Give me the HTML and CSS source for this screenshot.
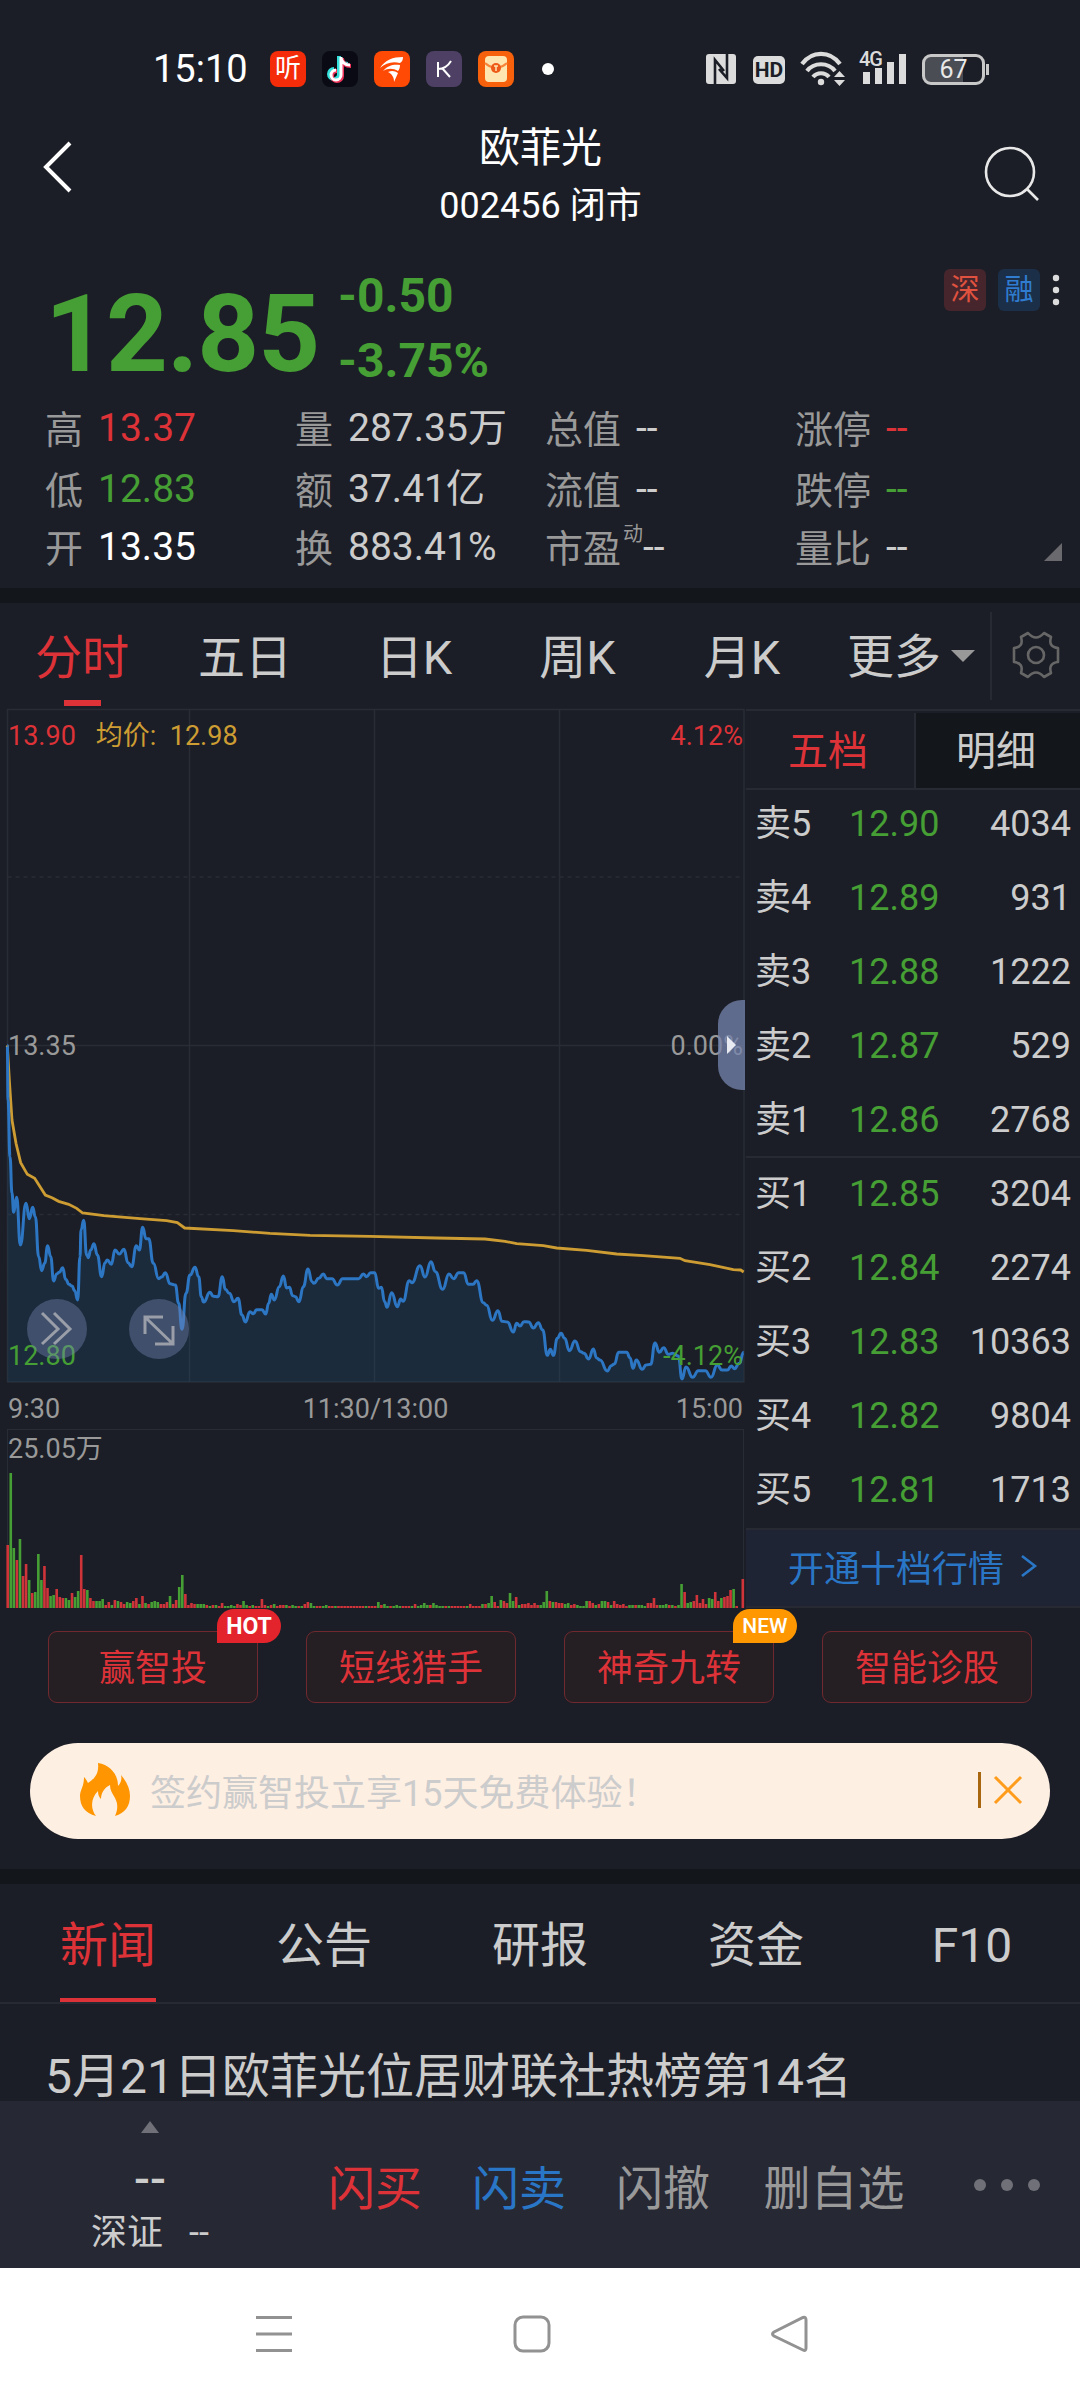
FILE: index.html
```
<!DOCTYPE html>
<html lang="zh-CN">
  <head>
    <meta charset="UTF-8" />
    <meta name="viewport" content="width=device-width, initial-scale=1.0" />
    <title>欧菲光 002456</title>
    <link rel="stylesheet" href="styles.css">
  </head>
  <body>
    <div class="status">
      <span class="clock">15:10</span>
      <div class="apps">
        <span class="app app-ting">听</span>
        <svg class="app" viewBox="0 0 36 36">
          <rect width="36" height="36" rx="8" fill="#0a0a14" />
          <g fill="none" stroke-width="4">
            <path d="M18 6v18a5 5 0 1 1-5-5M18 7c1 5 4 7 9 7" stroke="#35e0dc" transform="translate(-1 -1)" />
            <path d="M20 7v18a5 5 0 1 1-5-5M20 8c1 5 4 7 9 7" stroke="#f0355c" />
            <path d="M19 6v18a5 5 0 1 1-5-5M19 7c1 5 4 7 9 7" stroke="#fff" stroke-width="3" />
          </g>
        </svg>
        <svg class="app" viewBox="0 0 36 36">
          <rect width="36" height="36" rx="8" fill="#ff4a05" />
          <g fill="#fff">
            <path d="M6 17C11 9 19 6 29 6C29 9 28 11 26 12C18 10 12 12 6 17Z" />
            <path d="M9 20C14 14 20 13 26 14C26 17 25 19 24 20C19 17 14 17 9 20Z" />
            <path d="M14 21C18 19 21 20 24 22L20 31C20 26 18 23 14 21Z" />
          </g>
        </svg>
        <svg class="app" viewBox="0 0 36 36">
          <rect width="36" height="36" rx="8" fill="#4d4064" />
          <path d="M12 11v15M25 10C22 15 18 18 12 18M16 17l8 9" fill="none" stroke="#fff" stroke-width="2" />
        </svg>
        <svg class="app" viewBox="0 0 36 36">
          <rect width="36" height="36" rx="8" fill="#f7610b" />
          <rect x="7" y="5" width="22" height="26" rx="4" fill="#ffe6b0" />
          <path d="M7 12c4 4 6 4 11 5 5-1 7-1 11-5" fill="none" stroke="#f7843b" stroke-width="2" />
          <circle cx="18" cy="17" r="5" fill="#ee5a18" />
          <path d="M16 15h4M18 15v5" stroke="#ffe6b0" stroke-width="1.5" />
        </svg>
      </div>
      <i class="dot"></i>
      <div class="signals">
        <svg width="30" height="30" viewBox="0 0 30 30">
          <rect width="30" height="30" rx="3" fill="#dcdcdc" />
          <path d="M9 30V6l9 11M21 0v24l-8-9" fill="none" stroke="#1b1e26" stroke-width="2.6" />
        </svg>
        <span class="hd">HD</span>
        <svg class="wifi" width="46" height="36" viewBox="0 0 46 36">
          <g fill="none" stroke="#dcdcdc" stroke-width="4.2">
            <path d="M2 13C12-0.500 30-0.500 40 13" />
            <path d="M7 20c7-9 21-9 28 0" />
            <path d="M13 26c4-5 12-5 16 0" />
          </g>
          <circle cx="21" cy="31" r="3.2" fill="#dcdcdc" />
          <path d="M34 26l5.500-6 5.500 6zM34 29l5.500 6 5.500-6z" fill="#dcdcdc" />
        </svg>
        <div class="cell">
          <span>4G</span>
          <svg width="44" height="32" viewBox="0 0 44 32">
            <path fill="#dcdcdc" d="M0 19h7v12H0zM12 15h7v16h-7zM24 9h7v22h-7zM36 1h7v30h-7z" />
          </svg>
        </div>
        <span class="battery">67</span>
      </div>
    </div>

    <header class="header">
      <svg width="34" height="54" viewBox="0 0 34 54">
        <path d="M30 3L6 27l24 24" fill="none" stroke="#fff" stroke-width="4" />
      </svg>
      <div class="title">
        <h1>欧菲光</h1>
        <p>002456 闭市</p>
      </div>
      <svg class="search" width="56" height="56" viewBox="0 0 56 56">
        <circle cx="26" cy="26" r="24" fill="none" stroke="#e8e8e8" stroke-width="2.6" />
        <path d="M43 43l11 11" stroke="#e8e8e8" stroke-width="2.6" />
      </svg>
    </header>

    <section class="quote">
      <div class="price">
        <strong>12.85</strong>
        <div class="change">
          <span>-0.50</span>
          <span>-3.75%</span>
        </div>
        <div class="marks">
          <span class="mark mark-sz">深</span>
          <span class="mark mark-rz">融</span>
          <svg width="8" height="32" viewBox="0 0 8 32" fill="#dcdcdc">
            <circle cx="4" cy="4" r="3.2" /><circle cx="4" cy="16" r="3.2" /><circle cx="4" cy="28" r="3.2" />
          </svg>
        </div>
      </div>
      <div class="stats">
        <div><label>高</label><b class="red">13.37</b></div>
        <div><label>量</label><b>287.35万</b></div>
        <div><label>总值</label><b>--</b></div>
        <div><label>涨停</label><b class="red">--</b></div>
        <div><label>低</label><b class="green">12.83</b></div>
        <div><label>额</label><b>37.41亿</b></div>
        <div><label>流值</label><b>--</b></div>
        <div><label>跌停</label><b class="green">--</b></div>
        <div><label>开</label><b class="white">13.35</b></div>
        <div><label>换</label><b>883.41%</b></div>
        <div><label class="pe">市盈<sup>动</sup></label><b>--</b></div>
        <div><label>量比</label><b>--</b></div>
      </div>
      <i class="corner"></i>
    </section>

    <nav class="periods">
      <a class="on">分时</a>
      <a>五日</a>
      <a>日K</a>
      <a>周K</a>
      <a>月K</a>
      <a class="more">更多<i></i></a>
      <span class="gear">
        <svg width="48" height="50" viewBox="0 0 48 50" fill="none" stroke="#666" stroke-width="2.6">
          <path stroke-linejoin="round" d="M16 3Q24 12 32 3L39 7Q36 17 46 18V32Q36 33 39 43L32 47Q24 38 16 47L9 43Q12 33 2 32V18Q12 17 9 7Z" />
          <circle cx="24" cy="25" r="8" />
        </svg>
      </span>
    </nav>

    <main class="market">
      <div class="charts">
        <div class="trend">
          <svg width="746" height="676" viewBox="0 708 746 676">
            <g stroke="#282c34" stroke-width="1.5" fill="none">
              <path d="M7.5 709.5H744V1382H7.5zM189.5 709V1382M374.5 709V1382M559.5 709V1382M7.5 1045.5H744" />
              <path d="M7.5 877H744M7.5 1214.5H744" stroke-dasharray="4 4" />
            </g>
            <path id="area" fill="#1c72b0" fill-opacity=".16" />
            <path id="avg" fill="none" stroke="#cd9d33" stroke-width="2.8" />
            <path id="line" fill="none" stroke="#2c76c4" stroke-width="3" stroke-linejoin="round" />
          </svg>
          <div class="tag top"><span class="red">13.90</span><span class="avg">均价:&nbsp; 12.98</span><span class="red end">4.12%</span></div>
          <div class="tag mid"><span>13.35</span><span class="end">0.00%</span></div>
          <div class="tag low"><span class="green">12.80</span><span class="green end">-4.12%</span></div>
          <div class="round next">
            <svg width="60" height="60" viewBox="0 0 60 60"><path d="M15 14l16 16-16 15M27 14l16 16-16 15" /></svg>
          </div>
          <div class="round full">
            <svg width="60" height="60" viewBox="0 0 60 60"><path d="M16 35V18h18M17 19l27 26M26 45h18V27" /></svg>
          </div>
          <div class="handle"><i></i></div>
        </div>
        <div class="times"><span>9:30</span><span>11:30/13:00</span><span>15:00</span></div>
        <div class="volume">
          <span>25.05万</span>
          <svg width="746" height="140" viewBox="0 0 746 140">
            <path id="up" fill="#cf343a" />
            <path id="down" fill="#469f34" />
          </svg>
        </div>
      </div>

      <div class="book">
        <div class="book-tabs"><a class="on">五档</a><a>明细</a></div>
        <ul class="sell">
          <li><span>卖5</span><em>12.90</em><b>4034</b></li>
          <li><span>卖4</span><em>12.89</em><b>931</b></li>
          <li><span>卖3</span><em>12.88</em><b>1222</b></li>
          <li><span>卖2</span><em>12.87</em><b>529</b></li>
          <li><span>卖1</span><em>12.86</em><b>2768</b></li>
        </ul>
        <ul class="buy">
          <li><span>买1</span><em>12.85</em><b>3204</b></li>
          <li><span>买2</span><em>12.84</em><b>2274</b></li>
          <li><span>买3</span><em>12.83</em><b>10363</b></li>
          <li><span>买4</span><em>12.82</em><b>9804</b></li>
          <li><span>买5</span><em>12.81</em><b>1713</b></li>
        </ul>
        <a class="level2">开通十档行情
          <svg width="18" height="24" viewBox="0 0 18 24"><path d="M2 2l13 10L2 22" fill="none" stroke="#2a76c6" stroke-width="2.6" /></svg>
        </a>
      </div>
    </main>

    <section class="tools">
      <a>赢智投<i class="badge hot">HOT</i></a>
      <a>短线猎手</a>
      <a>神奇九转<i class="badge new">NEW</i></a>
      <a>智能诊股</a>
    </section>

    <div class="banner">
      <svg width="52" height="56" viewBox="0 0 52 56">
        <path fill="#ff9500" d="M19 1C31 3 39 12 39 24C42 21 43 17 42 13C48 20 51 27 51 34C51 44 46 51 36 54C39 47 39 42 36 36C33 31 31 28 31 23C25 26 22 31 22 37C20 35 19 33 19 29C12 36 11 46 17 54C6 51 1 44 1 34C1 28 5 25 5 15C7 17 8 19 9 21C17 16 20 10 19 1Z" />
      </svg>
      <p>签约赢智投立享15天免费体验！</p>
      <i></i>
      <svg class="close" width="30" height="30" viewBox="0 0 30 30"><path d="M2 2l26 26M28 2L2 28" stroke="#ff9c1b" stroke-width="3" /></svg>
    </div>

    <nav class="info-tabs">
      <a class="on">新闻</a>
      <a>公告</a>
      <a>研报</a>
      <a>资金</a>
      <a>F10</a>
    </nav>
    <div class="news">5月21日欧菲光位居财联社热榜第14名</div>

    <footer class="trade">
      <div class="index">
        <i></i>
        <b>--</b>
        <p><span>深证</span><span>--</span></p>
      </div>
      <a class="red">闪买</a>
      <a class="blue">闪卖</a>
      <a>闪撤</a>
      <a class="wide">删自选</a>
      <svg width="70" height="16" viewBox="0 0 70 16" fill="#6f7078">
        <circle cx="8" cy="8" r="6" /><circle cx="35" cy="8" r="6" /><circle cx="62" cy="8" r="6" />
      </svg>
    </footer>

    <div class="sysnav">
      <svg width="38" height="38" viewBox="0 0 38 38"><path d="M1 2.5h36M1 19h36M1 35.5h36" /></svg>
      <svg width="38" height="38" viewBox="0 0 38 38"><rect x="2" y="2" width="34" height="34" rx="8" /></svg>
      <svg width="38" height="38" viewBox="0 0 38 38"><path d="M33 2.5Q36 1.500 36 5V33Q36 36.500 33 35L4 21Q1 19 4 17Z" /></svg>
    </div>

    <script>
      // points are stored at 3x, y counted from 1000
      const price = [
        22,136, 24,300, 30,470, 36,580, 41,637, 50,592, 61,735, 78,610, 88,656, 98,622, 106,650, 116,770, 125,812, 134,790,
        143,737, 152,770, 161,843, 170,822, 178,817, 188,803, 197,838, 207,853, 216,858, 224,872, 233,900, 240,770, 243,690,
        251,661, 260,765, 265,773, 272,750, 282,731, 292,765, 305,830, 315,788, 322,780, 334,793, 345,750, 358,762, 372,748,
        384,788, 395,800, 409,737, 418,750, 428,682, 438,716, 446,716, 460,790, 476,836, 485,831, 496,818, 510,851, 526,855,
        536,910, 546,988, 558,880, 570,825, 585,802, 596,830, 604,890, 611,906, 630,877, 640,889, 654,890, 667,830, 676,868,
        688,880, 702,905, 714,895, 726,945, 736,966, 750,935, 760,941, 770,929, 786,929, 797,942, 806,910, 814,883, 823,900,
        838,860, 850,828, 860,864, 868,862, 878,887, 886,890, 897,905, 910,860, 924,807, 936,845, 942,850, 956,835, 970,822,
        980,836, 996,836, 1012,855, 1028,836, 1076,836, 1090,822, 1100,830, 1112,818, 1124,818, 1136,865, 1144,862, 1154,905,
        1161,922, 1175,878, 1192,920, 1202,897, 1209,904, 1228,842, 1236,848, 1260,797, 1275,831, 1293,785, 1306,815,
        1328,868, 1347,822, 1361,836, 1376,818, 1391,818, 1405,853, 1419,853, 1430,842, 1450,908, 1460,916, 1477,961,
        1494,932, 1506,964, 1522,966, 1540,996, 1550,970, 1560,978, 1572,965, 1586,966, 1600,984, 1615,968, 1628,990,
        1642,1066, 1651,1048, 1660,1066, 1672,1015, 1683,1000, 1694,1015, 1708,1052, 1725,1023, 1742,1055, 1752,1060,
        1766,1077, 1780,1047, 1790,1074, 1800,1080, 1822,1113, 1834,1097, 1843,1092, 1856,1057, 1880,1057, 1890,1073,
        1899,1105, 1909,1080, 1927,1108, 1938,1095, 1952,1093, 1965,1029, 1978,1057, 1991,1043, 2005,1063, 2018,1060,
        2035,1068, 2046,1137, 2058,1101, 2078,1132, 2095,1112, 2116,1112, 2133,1132, 2152,1095, 2166,1110, 2182,1110,
        2194,1098, 2203,1106, 2218,1090, 2231,1057
      ]
      const average = [
        22,136, 28,240, 36,360, 48,430, 62,488, 82,523, 104,535, 136,585, 156,593, 176,604, 206,613, 230,625, 248,639,
        312,647, 420,656, 500,662, 532,668, 554,684, 700,692, 810,700, 930,706, 1110,709, 1310,714, 1455,717, 1515,724,
        1550,731, 1630,737, 1670,744, 1760,751, 1850,762, 1930,767, 2040,775, 2055,782, 2130,794, 2200,809, 2222,810, 2231,816
      ]
      // one bar per minute, r = up, g = down
      const volume = `r63 g135 g60 r48 g69 r32 r44 g28 r15 g16 g54 g28 r42 r20 g12 g13 r19 r11 r10 g10 g8 r15 g11 g17 r53 r19 g18 r10 r7 g7
        g7 g9 r3 r6 g3 r8 g7 r6 r4 g6 g5 r7 r10 g4 r12 g5 r4 g6 g7 g6 r4 r4 r6 g12 r4 r8 g21 g33 r14 r3
        r5 r4 g4 g4 g4 r3 g2 r3 g3 r2 r5 g2 g2 g3 g2 r4 r3 g7 g3 r2 g3 r2 r2 r9 r3 g2 r3 g4 r2 r3
        r3 g3 r2 g3 g2 r2 g2 r4 r6 g5 g2 r2 r2 g2 g3 r2 r2 g2 r2 r2 r2 r2 r2 r2 r2 r2 r2 g2 r2 r2
        r2 g6 r3 g4 g2 r2 g2 g3 g2 r2 r2 r2 g2 r4 g2 g3 g5 g3 r3 g5 g3 g2 g2 r2 g2 r2 r2 r2 r2 r2
        g2 r4 r2 r2 r2 g4 r4 g5 g12 r6 r2 g8 r7 r5 g15 g7 r11 g3 r4 r4 r5 r3 r5 r3 g3 g6 g17 r7 g6 r6
        r5 r5 g4 g5 r3 r4 g3 g2 g2 g7 r7 r5 g3 r4 g7 g7 r6 g3 r7 r4 r3 r4 r2 g3 g3 r3 g3 g3 g2 r5
        r5 r10 r3 g3 g3 g4 r3 g3 r2 g3 g24 r16 g5 g6 r7 r13 r5 r9 r4 g10 g9 r16 r7 g10 r11 r12 r18 g19 r2 g0 r29`.split(/\s+/)

      const toPath = (list, smooth) => {
        let d = ''
        let px, py
        for (let i = 0; i < list.length; i += 2) {
          const x = list[i] / 3
          const y = 1000 + list[i + 1] / 3
          if (i === 0) d += `M${x} ${y}`
          else if (smooth) d += `C${(px + x) / 2} ${py} ${(px + x) / 2} ${y} ${x} ${y}`
          else d += `L${x} ${y}`
          px = x
          py = y
        }
        return d
      }
      const line = toPath(price, true)
      document.querySelector('#line').setAttribute('d', line)
      document.querySelector('#area').setAttribute('d', line + 'V1382H7.500Z')
      document.querySelector('#avg').setAttribute('d', toPath(average, false))

      const bars = { r: '', g: '' }
      volume.forEach((item, i) => {
        const h = Number(item.slice(1))
        bars[item[0]] += `M${6.4 + i * 3.063} 140v-${h}h2.6v${h}z`
      })
      document.querySelector('#up').setAttribute('d', bars.r)
      document.querySelector('#down').setAttribute('d', bars.g)
    </script>
  </body>
</html>
```
FILE: styles.css
```
* {
  box-sizing: border-box;
  margin: 0;
  padding: 0;
}
body {
  width: 1080px;
  height: 2400px;
  overflow: hidden;
  background: #1b1e26;
  color: #ccc;
  font-family: Roboto, "Noto Sans CJK SC", sans-serif;
  font-size: 36px;
}
svg {
  display: block;
  flex: none;
}
i, em {
  font-style: normal;
}
b {
  font-weight: 400;
}
ul {
  list-style: none;
}
.red {
  color: #dc3238;
}
.green {
  color: #469f34;
}
.white {
  color: #fff;
}
.blue {
  color: #2a76c6;
}

/* 状态栏 */
.status {
  display: flex;
  align-items: center;
  height: 112px;
  padding: 26px 95px 0 152px;
}
.clock {
  width: 118px;
  padding-left: 1px;
  color: #fff;
  font-size: 38px;
}
.apps {
  display: flex;
  gap: 16px;
}
.app {
  width: 36px;
  height: 36px;
}
.app-ting {
  border-radius: 8px;
  background: #f52c0a;
  color: #fff;
  font-size: 26px;
  line-height: 35px;
  text-align: center;
}
.dot {
  width: 12px;
  height: 12px;
  margin-left: 28px;
  border-radius: 50%;
  background: #fff;
}
.signals {
  display: flex;
  align-items: center;
  margin-left: auto;
}
.hd {
  width: 32px;
  height: 28px;
  margin: 2px 15px 0 17px;
  border-radius: 5px;
  background: #dcdcdc;
  color: #1b1e26;
  font-size: 21px;
  font-weight: 700;
  line-height: 29px;
  text-align: center;
}
.cell {
  position: relative;
  margin: 0 15px 0 17px;
}
.cell span {
  position: absolute;
  left: -4px;
  top: -5px;
  color: #dcdcdc;
  font-size: 20px;
  font-weight: 500;
  letter-spacing: -1px;
  line-height: 22px;
}
.battery {
  position: relative;
  width: 63px;
  height: 31px;
  border: 3px solid #c8c8c8;
  border-radius: 9px;
  background: linear-gradient(90deg, #4a4d54 67%, #1b1e26 67%);
  color: #e8e8e8;
  font-size: 25px;
  line-height: 26px;
  text-align: center;
}
.battery::after {
  content: "";
  position: absolute;
  right: -7px;
  top: 7px;
  width: 3px;
  height: 11px;
  background: #c8c8c8;
}

/* 标题 */
.header {
  display: flex;
  justify-content: space-between;
  height: 148px;
  padding: 28px 40px 0 40px;
  color: #fff;
}
.title {
  margin: -19px 0 0 23px;
  text-align: center;
}
.title h1 {
  font-size: 41px;
  font-weight: 400;
  line-height: 54px;
}
.title p {
  margin-top: 7px;
  font-size: 36px;
  line-height: 48px;
}
.search {
  margin-top: 6px;
}

/* 报价 */
.quote {
  position: relative;
  height: 343px;
  border-bottom: 15px solid #13161a;
}
.price {
  display: flex;
  height: 145px;
  padding-left: 45px;
  color: #469f34;
}
.price strong {
  width: 293px;
  font-size: 108px;
  font-weight: 700;
  letter-spacing: -1px;
  line-height: 149px;
}
.change {
  font-size: 48px;
  font-weight: 700;
}
.change span {
  display: block;
  height: 65px;
  line-height: 72px;
}
.marks {
  display: flex;
  gap: 12px;
  margin: 9px 20px 0 auto;
}
.mark {
  width: 42px;
  height: 42px;
  border-radius: 6px;
  font-size: 29px;
  line-height: 43px;
  text-align: center;
}
.mark-sz {
  background: #46262c;
  color: #e0523f;
}
.mark-rz {
  background: #1c2f48;
  color: #2f7cd0;
}
.marks svg {
  margin-top: 5px;
}
.stats {
  display: grid;
  grid-template-columns: repeat(4, 250px);
  grid-template-rows: 61px 58px 60px;
  padding-left: 45px;
}
.stats div {
  display: flex;
}
.stats label {
  margin: 1px 15px 0 0;
  color: #999;
  font-size: 38px;
  line-height: 48px;
}
.stats b {
  font-size: 39px;
  line-height: 46px;
}
.pe {
  display: flex;
}
.stats .pe {
  margin-right: 0;
}
.pe sup {
  margin: -9px 0 0 2px;
  font-size: 20px;
  line-height: 36px;
}
.corner {
  position: absolute;
  right: 18px;
  top: 283px;
  border: 9px solid #6a6a6e;
  border-left-color: transparent;
  border-top-color: transparent;
}

/* 周期 */
.periods {
  display: flex;
  height: 106px;
  font-size: 47px;
  line-height: 109px;
  text-align: center;
}
.periods a {
  position: relative;
  width: 164px;
}
.on {
  color: #dc3238;
}
.periods a:nth-child(2) {
  width: 162px;
}
.periods a:nth-child(3) {
  width: 176px;
}
.periods a:nth-child(4) {
  width: 151px;
}
.periods a:nth-child(5) {
  width: 178px;
}
.periods .on::after {
  content: "";
  position: absolute;
  left: 64px;
  bottom: 3px;
  width: 37px;
  height: 6px;
  background: #dc3238;
}
.periods .more {
  display: flex;
  gap: 10px;
  align-items: center;
  width: 159px;
  padding-left: 16px;
}
.more i {
  border: 12px solid transparent;
  border-top-color: #999;
  border-bottom: 0;
}
.gear {
  height: 88px;
  margin-top: 9px;
  padding: 18px 20px 0;
  border-left: 2px solid #272a33;
}

/* 分时图 */
.market {
  display: flex;
  height: 898px;
}
.charts {
  width: 746px;
  font-size: 27px;
  color: #999;
}
.trend {
  position: relative;
  height: 675px;
  margin-top: -1px;
}
.tag {
  position: absolute;
  left: 8px;
  right: 3px;
  display: flex;
  line-height: 32px;
}
.end {
  margin-left: auto;
}
.top {
  top: 12px;
}
.mid {
  top: 322px;
}
.low {
  top: 632px;
}
.avg {
  margin-left: 20px;
  color: #cd9d33;
}
.round {
  position: absolute;
  top: 591px;
  width: 60px;
  height: 60px;
  border-radius: 50%;
  background: rgba(120, 134, 180, 0.4);
}
.round path {
  fill: none;
  stroke: #999ea8;
  stroke-width: 3;
}
.next {
  left: 27px;
}
.full {
  left: 129px;
}
.handle {
  position: absolute;
  right: 1px;
  top: 292px;
  width: 27px;
  height: 90px;
  padding: 36px 0 0 9px;
  border-radius: 24px 0 0 24px;
  background: rgba(117, 131, 172, 0.76);
}
.handle i {
  display: block;
  width: 0;
  border: 9px solid transparent;
  border-left-color: #e8eaf2;
  border-right: 0;
}
.times {
  display: grid;
  grid-template-columns: 1fr auto 1fr;
  height: 46px;
  padding: 0 3px 0 8px;
  line-height: 52px;
}
.times span:last-child {
  text-align: right;
}
.volume {
  width: 737px;
  height: 179px;
  margin-left: 7px;
  border: 1px solid #282c34;
  border-bottom: 0;
}
.volume span {
  display: block;
  height: 38px;
  line-height: 39px;
}
.volume svg {
  margin-left: -8px;
}

/* 五档 */
.book {
  width: 334px;
  border-top: 2px solid #272a33;
}
.book-tabs {
  display: flex;
  height: 79px;
  border-bottom: 2px solid #272a33;
  font-size: 40px;
  line-height: 82px;
  text-align: center;
}
.book-tabs a {
  width: 168px;
  padding-right: 4px;
}
.book-tabs a + a {
  width: 166px;
  margin-top: 2px;
  border-left: 2px solid #272a33;
  background: #13161a;
  line-height: 78px;
}
.book ul {
  height: 369px;
  margin-top: -3px;
}
.book li {
  display: flex;
  height: 74px;
  padding: 0 9px 0 9px;
  line-height: 75px;
}
.book li span {
  width: 94px;
}
.book em {
  color: #469f34;
}
.book li b {
  margin-left: auto;
}
.book .buy {
  height: 372px;
  margin-top: 0;
  border-top: 2px solid #272a33;
}
.book .buy li {
  line-height: 73px;
}
.level2 {
  display: flex;
  align-items: center;
  gap: 16px;
  height: 80px;
  padding: 0 0 4px 42px;
  border-top: 2px solid #272a33;
  border-bottom: 2px solid #272a33;
  background: #1e2434;
  color: #2a76c6;
}

/* 工具 */
.tools {
  display: flex;
  gap: 48px;
  height: 136px;
  padding: 24px 48px 0;
}
.tools a {
  position: relative;
  width: 210px;
  height: 72px;
  border: 1px solid #70292f;
  border-radius: 9px;
  background: #251e23;
  color: #dc3238;
  line-height: 74px;
  text-align: center;
}
.badge {
  position: absolute;
  left: 168px;
  top: -23px;
  width: 64px;
  height: 34px;
  border-radius: 17px 17px 17px 0;
  background: #e4242c;
  color: #fff;
  font-size: 23px;
  font-weight: 700;
  line-height: 35px;
}
.new {
  background: #ff9800;
  font-size: 21px;
  font-weight: 500;
}
.banner {
  display: flex;
  align-items: center;
  width: 1020px;
  height: 96px;
  margin: 0 30px 30px;
  padding: 0 27px 2px 49px;
  border-radius: 48px;
  background: #feefe3;
  color: #ccc;
}
.banner p {
  margin-left: 19px;
}
.banner i {
  width: 3px;
  height: 36px;
  margin-left: auto;
  background: #a8670f;
}
.close {
  margin-left: 12px;
}

/* 资讯 */
.info-tabs {
  display: flex;
  height: 135px;
  border-top: 15px solid #13161a;
  border-bottom: 2px solid #272a33;
  font-size: 48px;
  line-height: 124px;
  text-align: center;
}
.info-tabs a {
  position: relative;
  width: 216px;
}
.info-tabs .on::after {
  content: "";
  position: absolute;
  left: 60px;
  bottom: 0;
  width: 96px;
  height: 4px;
  background: #dc3238;
}
.news {
  height: 97px;
  padding: 49px 0 0 45px;
  font-size: 48px;
  line-height: 48px;
}

/* 底部交易栏 */
.trade {
  display: flex;
  height: 167px;
  background: #262833;
  color: #999;
  font-size: 47px;
  line-height: 175px;
  text-align: center;
}
.trade a {
  width: 144px;
}
.trade .wide {
  width: 198px;
}
.index {
  width: 303px;
  padding-top: 20px;
  color: #ccc;
  line-height: 1;
}
.index i {
  display: block;
  width: 0;
  margin-left: 141px;
  border: 9px solid transparent;
  border-top: 0;
  border-bottom: 12px solid #6f7078;
}
.index b {
  display: block;
  height: 74px;
  line-height: 91px;
  padding-right: 3px;
  font-weight: 500;
}
.index p {
  display: flex;
  gap: 26px;
  padding-left: 91px;
  font-size: 36px;
  line-height: 53px;
}
.trade svg {
  margin: 76px 0 0 39px;
}
.sysnav {
  display: flex;
  justify-content: space-between;
  height: 132px;
  padding: 47px 272px 0 255px;
  background: #fff;
}
.sysnav svg {
  fill: none;
  stroke: #929292;
  stroke-width: 3;
}
```
